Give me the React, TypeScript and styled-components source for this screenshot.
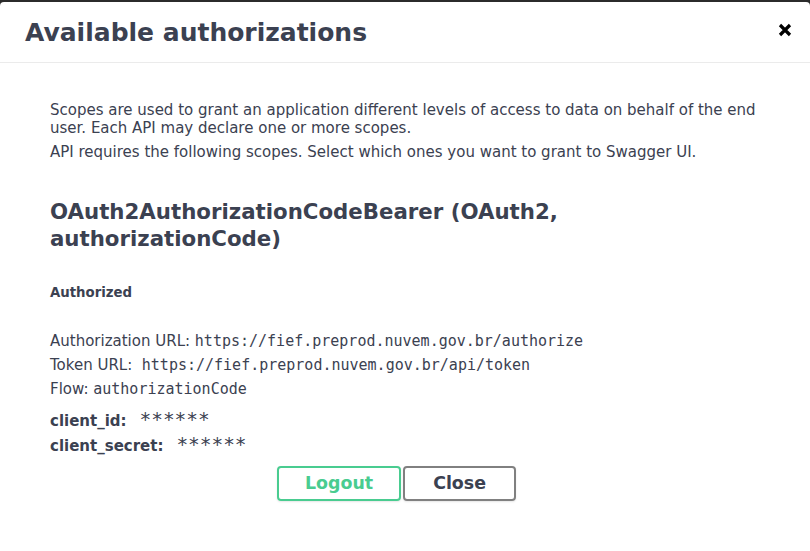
import React from "react";
import styled, { createGlobalStyle } from "styled-components";

const Global = createGlobalStyle`
  html, body { margin: 0; padding: 0; }
  body {
    background: #2b2b2b;
    font-family: "DejaVu Sans", sans-serif;
    color: #3b4151;
    overflow: hidden;
  }
`;

const Modal = styled.div`
  margin-top: 2px;
  width: 810px;
  height: 560px;
  background: #fff;
  border-radius: 4px;
  box-sizing: border-box;
`;

const Header = styled.div`
  display: flex;
  align-items: center;
  justify-content: space-between;
  padding: 16px 18px 14px 25px;
  border-bottom: 1px solid #ebebeb;
`;

const Title = styled.h3`
  margin: 0;
  font-size: 25px;
  line-height: 30px;
  font-weight: 700;
  color: #3b4151;
`;

const CloseIcon = styled.button`
  border: 0;
  background: none;
  padding: 0;
  width: 14px;
  height: 14px;
  margin-bottom: 6px;
  display: flex;
  cursor: pointer;
`;

const Content = styled.div`
  padding: 38px 50px 0 50px;
`;

const Para = styled.p<{ $gap?: number }>`
  margin: ${(p) => p.$gap ?? 0}px 0 0;
  font-size: 15px;
  line-height: 18px;
`;

const SchemeTitle = styled.h4`
  margin: 37px 0 0;
  font-size: 21.3px;
  line-height: 27px;
  font-weight: 700;
`;

const Status = styled.h6`
  margin: 33px 0 0;
  font-size: 13.3px;
  line-height: 16px;
  font-weight: 700;
`;

const InfoList = styled.div`
  margin-top: 28px;
`;

const InfoRow = styled.p`
  margin: 0;
  font-size: 15px;
  line-height: 24px;
`;

const Code = styled.code`
  font-family: "DejaVu Sans Mono", monospace;
  font-size: 15px;
`;

const CredList = styled.div`
  margin-top: 7px;
`;

const CredRow = styled.div`
  display: flex;
  align-items: baseline;
  font-size: 15px;
  line-height: 23px;
`;

const CredLabel = styled.label`
  font-weight: 700;
  margin-right: 13px;
`;

const Stars = styled.code`
  font-family: "DejaVu Sans Mono", monospace;
  font-size: 19.4px;
`;

const ButtonRow = styled.div`
  display: flex;
  justify-content: center;
  gap: 2px;
  margin-top: 8px;
  padding-right: 17px;
`;

const Btn = styled.button<{ $variant?: "auth" | "done" }>`
  font-family: "DejaVu Sans", sans-serif;
  font-size: 17.4px;
  font-weight: 700;
  line-height: 21px;
  padding: 5px ${(p) => (p.$variant === "auth" ? 26 : 28)}px;
  border-radius: 4px;
  background: transparent;
  box-shadow: 0 1px 2px rgba(0, 0, 0, 0.1);
  border: 2px solid ${(p) => (p.$variant === "auth" ? "#49cc90" : "#808080")};
  color: ${(p) => (p.$variant === "auth" ? "#49cc90" : "#3b4151")};
  cursor: pointer;
`;

export default function App() {
  return (
    <>
      <Global />
      <Modal>
        <Header>
          <Title>Available authorizations</Title>
          <CloseIcon aria-label="Close">
            <svg width="14" height="14" viewBox="0 0 14 14">
              <path d="M2 2 L12 12 M12 2 L2 12" stroke="#000" strokeWidth="3.2" strokeLinecap="butt" />
            </svg>
          </CloseIcon>
        </Header>
        <Content>
          <Para>
            Scopes are used to grant an application different levels of access to data on behalf of the end
            user. Each API may declare one or more scopes.
          </Para>
          <Para $gap={6}>API requires the following scopes. Select which ones you want to grant to Swagger UI.</Para>
          <SchemeTitle>OAuth2AuthorizationCodeBearer (OAuth2, authorizationCode)</SchemeTitle>
          <Status>Authorized</Status>
          <InfoList>
            <InfoRow>
              Authorization URL: <Code>https://fief.preprod.nuvem.gov.br/authorize</Code>
            </InfoRow>
            <InfoRow>
              Token URL:{"\u00a0 "}
              <Code>https://fief.preprod.nuvem.gov.br/api/token</Code>
            </InfoRow>
            <InfoRow>
              Flow: <Code>authorizationCode</Code>
            </InfoRow>
          </InfoList>
          <CredList>
            <CredRow>
              <CredLabel>client_id:</CredLabel>
              <Stars>******</Stars>
            </CredRow>
            <CredRow>
              <CredLabel>client_secret:</CredLabel>
              <Stars>******</Stars>
            </CredRow>
          </CredList>
          <ButtonRow>
            <Btn $variant="auth">Logout</Btn>
            <Btn $variant="done">Close</Btn>
          </ButtonRow>
        </Content>
      </Modal>
    </>
  );
}
